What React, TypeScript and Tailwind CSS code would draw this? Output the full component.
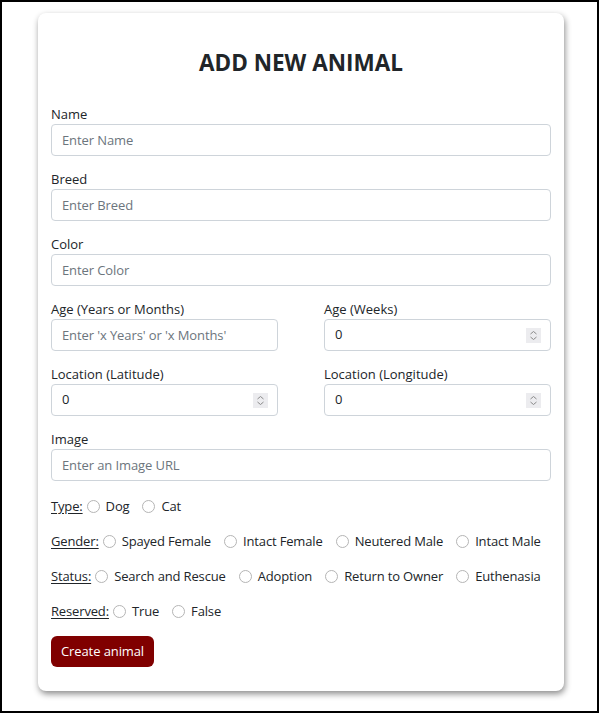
import React from "react";

const font = { fontFamily: '"Open Sans", "Noto Sans", sans-serif' };

function TextField({ label, placeholder }: { label: string; placeholder: string }) {
  return (
    <div className="flex flex-col">
      <label className="text-[13px] leading-[19px] text-[#212529]">{label}</label>
      <input
        type="text"
        placeholder={placeholder}
        className="h-[32px] w-full rounded-[4px] border border-[#ced4da] px-[10px] text-[13px] tracking-[-0.1px] text-[#212529] placeholder:text-[#6c757d] outline-none"
        style={font}
      />
    </div>
  );
}

function NumberField({ label }: { label: string }) {
  return (
    <div className="flex flex-col">
      <label className="text-[13px] leading-[19px] text-[#212529]">{label}</label>
      <div className="flex h-[32px] w-full items-center rounded-[4px] border border-[#ced4da] pl-[10px] pr-[9px]">
        <input
          type="text"
          readOnly
          value="0"
          className="min-w-0 flex-1 text-[13px] text-[#212529] outline-none"
          style={font}
        />
        <span className="flex h-[15px] w-[15px] flex-col items-center justify-center bg-[#ececef]">
          <svg width="9" height="11" viewBox="0 0 9 11" fill="none" stroke="#8a8a8a" strokeWidth="1">
            <path d="M1.5 4 L4.5 1.5 L7.5 4" />
            <path d="M1.5 7 L4.5 9.5 L7.5 7" />
          </svg>
        </span>
      </div>
    </div>
  );
}

function RadioRow({ label, name, options }: { label: string; name: string; options: string[] }) {
  return (
    <div className="flex items-center whitespace-nowrap text-[13px] leading-[19px] tracking-[-0.15px] text-[#212529]">
      <span className="shrink-0 underline underline-offset-2">{label}</span>
      {options.map((opt, i) => (
        <label key={opt} className={`flex shrink-0 items-center ${i === 0 ? "ml-[4px]" : "ml-[13px]"}`}>
          <input
            type="radio"
            name={name}
            className="h-[13px] w-[13px] shrink-0 appearance-none rounded-full border border-[#b5b5b5] bg-white"
          />
          <span className="ml-[6px]">{opt}</span>
        </label>
      ))}
    </div>
  );
}

export default function App() {
  return (
    <div className="h-[713px] w-[599px] border-2 border-black bg-white" style={font}>
      <div className="ml-[36px] mt-[11px] w-[526px] rounded-[8px] bg-white px-[13px] pb-[24px] pt-[36px] shadow-[1px_3px_6px_rgba(0,0,0,0.45)]">
        <h1 className="text-center text-[22.5px] font-bold leading-[28px] text-[#212529]">ADD NEW ANIMAL</h1>

        <div className="mt-[28px] flex flex-col gap-[14px]">
          <TextField label="Name" placeholder="Enter Name" />
          <TextField label="Breed" placeholder="Enter Breed" />
          <TextField label="Color" placeholder="Enter Color" />

          <div className="grid grid-cols-2 gap-x-[46px]">
            <TextField label="Age (Years or Months)" placeholder="Enter 'x Years' or 'x Months'" />
            <NumberField label="Age (Weeks)" />
          </div>

          <div className="grid grid-cols-2 gap-x-[46px]">
            <NumberField label="Location (Latitude)" />
            <NumberField label="Location (Longitude)" />
          </div>

          <TextField label="Image" placeholder="Enter an Image URL" />
        </div>

        <div className="mt-[16px] flex flex-col gap-[16px]">
          <RadioRow label="Type:" name="type" options={["Dog", "Cat"]} />
          <RadioRow
            label="Gender:"
            name="gender"
            options={["Spayed Female", "Intact Female", "Neutered Male", "Intact Male"]}
          />
          <RadioRow
            label="Status:"
            name="status"
            options={["Search and Rescue", "Adoption", "Return to Owner", "Euthenasia"]}
          />
          <RadioRow label="Reserved:" name="reserved" options={["True", "False"]} />
        </div>

        <button
          type="button"
          className="mt-[15px] h-[31px] rounded-[6px] bg-[#800000] px-[10px] text-[13px] tracking-[-0.1px] text-white"
          style={font}
        >
          Create animal
        </button>
      </div>
    </div>
  );
}
